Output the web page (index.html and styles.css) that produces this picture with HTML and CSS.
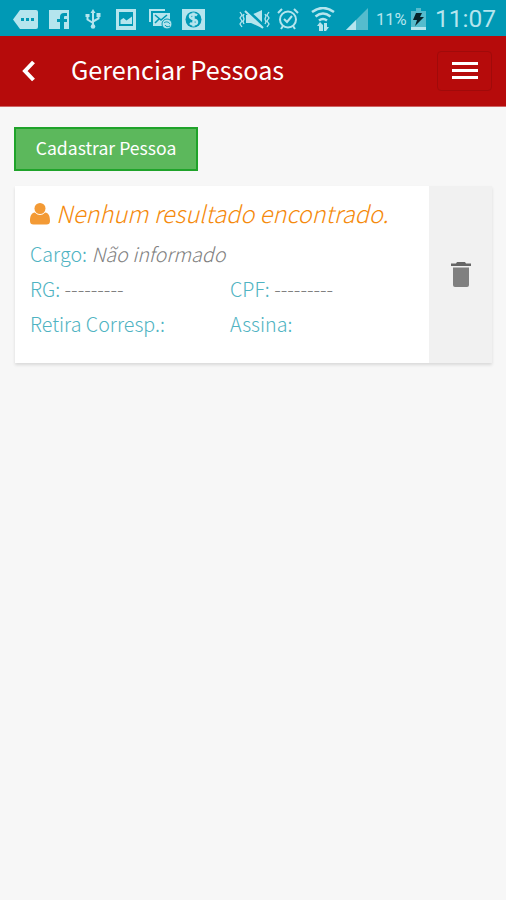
FILE: index.html
```html
<!DOCTYPE html>
<html lang="pt-BR">
<head>
  <meta charset="UTF-8" />
  <meta name="viewport" content="width=device-width, initial-scale=1" />
  <title>Gerenciar Pessoas</title>
  <link rel="stylesheet" href="styles.css">
</head>
<body>

  <div class="status-bar">
    <div class="status-left">
      <svg width="25" height="19" viewBox="0 0 25 19"><path class="fill" d="M7 0h16q2 0 2 2v15q0 2-2 2H7L0 9.500z"/><path class="hole" d="M8 8h3v3H8zM13 8h3v3h-3zM18 8h3v3h-3z"/></svg>
      <svg width="20" height="19" viewBox="0 0 20 19"><path class="fill" d="M0 0h20v19h-5v-7h3V9h-3V7q0-1 1-1h2V3h-3q-4 0-4 4v2H8v3h3v7H0z"/></svg>
      <svg width="16" height="20" viewBox="0 0 16 20"><path class="line" d="M8 3v14M2.500 7v3.500L8 14M13.500 6v3.500L8 12.500"/><path class="fill" d="M8 0l2.500 4h-5zM.5 5h4v3h-4zM11.500 4h4v4h-4z"/><circle class="fill" cx="8" cy="17.500" r="2.300"/></svg>
      <svg width="20" height="21" viewBox="0 0 20 21"><path class="fill" fill-rule="evenodd" d="M0 0h20v21H0zM3 3v14h14V3zM4.500 15v-4l3-2 3 2.500L16 7.500V15z"/></svg>
      <svg width="24" height="21" viewBox="0 0 24 21"><path class="line" d="M1 13V1h15"/><path class="fill" d="M4 4h17v13H4z"/><path class="cut" d="M6 6l6 5 6-5M6 14l4-4"/><circle class="fill rim" cx="18" cy="15" r="5"/><path class="cut thin-cut" d="M15 14c2-2 5-1 6 1M21 17c-2 1-4 1-5-1"/></svg>
      <svg width="23" height="21" viewBox="0 0 23 21"><path class="fill" d="M0 0h23v21H0z"/><circle class="hole" cx="11.500" cy="10.500" r="8"/><path class="line wide" d="M15 6.500c-2-2-7-1.500-7 1 0 3.500 7 2 7 5.500 0 3-5 3-7 1M11.500 3.500v14"/></svg>
    </div>
    <div class="status-right">
      <svg class="mute" width="33" height="20" viewBox="0 0 33 20"><path class="thin" d="M2 3l2 3-2 3 2 3-2 3 2 3M6 5L5 7l1 3-1 3 1 2M31 3l-2 3 2 3-2 3 2 3-2 3M27 5l1 2-1 3 1 3-1 2"/><path class="fill" d="M8 6h5l11-5v18l-11-5H8z"/><path class="slash" d="M9 1l18 17"/><path class="line" d="M7 2l18 17"/></svg>
      <svg class="alarm" width="22" height="22" viewBox="0 0 22 22"><circle class="line" cx="11" cy="11.500" r="8"/><path class="line" d="M1 5l4-4M21 5l-4-4M4 21l2-3M18 21l-2-3M7 11l3 3 5-6"/></svg>
      <svg class="wifi" width="24" height="24" viewBox="0 0 24 24"><path class="line wide" d="M1 5q11-8 22 0M4.500 9.500q7.500-6 15 0M8 13.500q4-3 8 0"/><path class="fill" d="M8 24v-5H6l3-4 3 3v6zM13 24v-8h3v4h2l-3 4z"/></svg>
      <svg class="signal" width="22" height="22" viewBox="0 0 22 22"><path class="faint" d="M22 0v22H0z"/><path class="fill" d="M10 12v10H0z"/></svg>
      <span class="percent">11%</span>
      <svg class="battery" width="15" height="22" viewBox="0 0 15 22"><path class="faint" d="M5 0h5v3h5v16H0V3h5z"/><path class="fill" d="M0 19h15v3H0z"/><path class="bolt" d="M5 5h6l-2 4h4L4 18l2-6H2z"/></svg>
      <span class="clock">11:07</span>
    </div>
  </div>

  <header class="navbar">
    <svg class="back" width="15" height="22" viewBox="0 0 15 22"><path d="M12.500 2L4 11l8.500 9"/></svg>
    <h1>Gerenciar Pessoas</h1>
    <button class="menu-btn" aria-label="Menu"><i></i><i></i><i></i></button>
  </header>

  <main>
    <button class="btn-add">Cadastrar Pessoa</button>

    <section class="card">
      <div class="card-body">
        <h2>
          <svg width="20" height="22" viewBox="0 0 20 22"><path d="M4.800 9.500C1.500 10 0 12.500 0 18q0 3.500 3.500 3.500h13q3.500 0 3.500-3.500c0-5.500-1.500-8-4.800-8.500q-5.200 5-10.400 0z"/><circle cx="10" cy="5.500" r="5.500"/></svg>
          <span>Nenhum resultado encontrado.</span>
        </h2>
        <div class="fields">
          <p class="full"><b>Cargo:</b> <em>Não informado</em></p>
          <p><b>RG:</b> <span class="empty">---------</span></p>
          <p><b>CPF:</b> <span class="empty">---------</span></p>
          <p><b>Retira Corresp.:</b></p>
          <p><b>Assina:</b></p>
        </div>
      </div>
      <button class="btn-delete" aria-label="Excluir">
        <svg width="20" height="25" viewBox="0 0 20 25"><path class="lid" d="M0 1.500h5L6 0h8l1 1.500h5V4H0z"/><path class="can" d="M2 5.500h16V23q0 2-2 2H4q-2 0-2-2z"/></svg>
      </button>
    </section>
  </main>

</body>
</html>
```
FILE: styles.css
```css
* {
  box-sizing: border-box;
}
body {
  margin: 0;
  min-height: 100vh;
  background: #f7f7f7;
  font-family: 'Noto Sans CJK SC', sans-serif;
  color: #808080;
}
h1, h2, p {
  margin: 0;
  font-weight: 400;
}
button {
  font-family: inherit;
  padding: 0;
}
svg {
  display: block;
  flex: none;
}

/* status bar */
.status-bar {
  height: 36px;
  background: #0099b5;
  display: flex;
  justify-content: space-between;
  align-items: center;
  padding: 2px 10px 0 13px;
  font-family: Roboto, sans-serif;
  color: #b5e5ee;
}
.status-left, .status-right {
  display: flex;
  align-items: center;
}
.status-left {
  gap: 13px;
}
.status-left svg:nth-child(2) {
  margin-left: -2px;
}
.status-left svg:nth-child(3) {
  margin: 0 2px 0 3px;
}
.status-left svg:nth-child(6) {
  margin-left: -4px;
}
.fill { fill: #b5e5ee; }
.hole { fill: #0099b5; }
.faint { fill: #55bccd; }
.bolt { fill: #062329; }
.rim { stroke: #0099b5; }
.line, .thin {
  fill: none;
  stroke: #b5e5ee;
  stroke-width: 2;
}
.line.wide {
  stroke-width: 2.5;
}
.thin {
  stroke-width: 1.3;
}
.cut, .slash {
  fill: none;
  stroke: #0099b5;
  stroke-width: 1.6;
}
.thin-cut {
  stroke-width: 1;
}
.slash {
  stroke-width: 3;
}
.alarm { margin-left: 6px; }
.wifi { margin-left: 12px; }
.signal { margin-left: 11px; }
.percent {
  margin-left: 8px;
  width: 31px;
  font-size: 16.5px;
}
.battery { margin-left: 4px; }
.clock {
  margin-left: 9px;
  width: 61px;
  font-size: 24.5px;
  line-height: 30px;
}

/* top bar */
.navbar {
  height: 71px;
  background: #b60b0b;
  border-bottom: 1px solid #cf6565;
  display: flex;
  align-items: center;
  padding: 0 14px 0 21px;
}
.back path {
  fill: none;
  stroke: #fff;
  stroke-width: 4;
}
.navbar h1 {
  margin: 0 0 4px 35px;
  font-size: 25.2px;
  line-height: 40px;
  color: #fff;
  flex: 1;
  white-space: nowrap;
}
.menu-btn {
  width: 55px;
  height: 40px;
  background: none;
  border: 1px solid #a00a0a;
  border-radius: 4px;
  display: flex;
  flex-direction: column;
  align-items: center;
  justify-content: center;
  gap: 4px;
  padding-bottom: 1px;
}
.menu-btn i {
  width: 26px;
  height: 3px;
  background: #fff;
}

main {
  padding: 20px 14px;
}
.btn-add {
  display: block;
  width: 184px;
  height: 44px;
  background: #5cb85c;
  border: 2px solid #1fa32a;
  color: #fff;
  font-size: 17.6px;
  line-height: 38px;
  padding-bottom: 2px;
  white-space: nowrap;
}

/* person card */
.card {
  display: flex;
  height: 177px;
  margin: 15px 0 0 1px;
  background: #fff;
  box-shadow: 0 2px 3px rgba(0, 0, 0, 0.12);
}
.card-body {
  flex: 1;
  padding: 11px 15px;
}
.card h2 {
  display: flex;
  align-items: center;
  gap: 6px;
  height: 34px;
  font-size: 23.6px;
  font-weight: 300;
  line-height: 34px;
  font-style: italic;
  color: #f58a0c;
  white-space: nowrap;
}
.card h2 svg {
  fill: #f39a35;
}
.card h2 span {
  margin-bottom: 2px;
}
.fields {
  display: grid;
  grid-template-columns: 200px 1fr;
  grid-auto-rows: 35px;
  margin-top: 5px;
  font-size: 19.7px;
  line-height: 35px;
  white-space: nowrap;
}
.fields p, .fields b {
  font-weight: 300;
}
.fields .full {
  grid-column: 1 / -1;
}
.fields b {
  color: #4fb3c2;
}
.btn-delete {
  width: 63px;
  border: none;
  background: #f1f1f1;
  display: flex;
  align-items: center;
  justify-content: center;
}
.lid { fill: #666; }
.can { fill: #808080; }
```
